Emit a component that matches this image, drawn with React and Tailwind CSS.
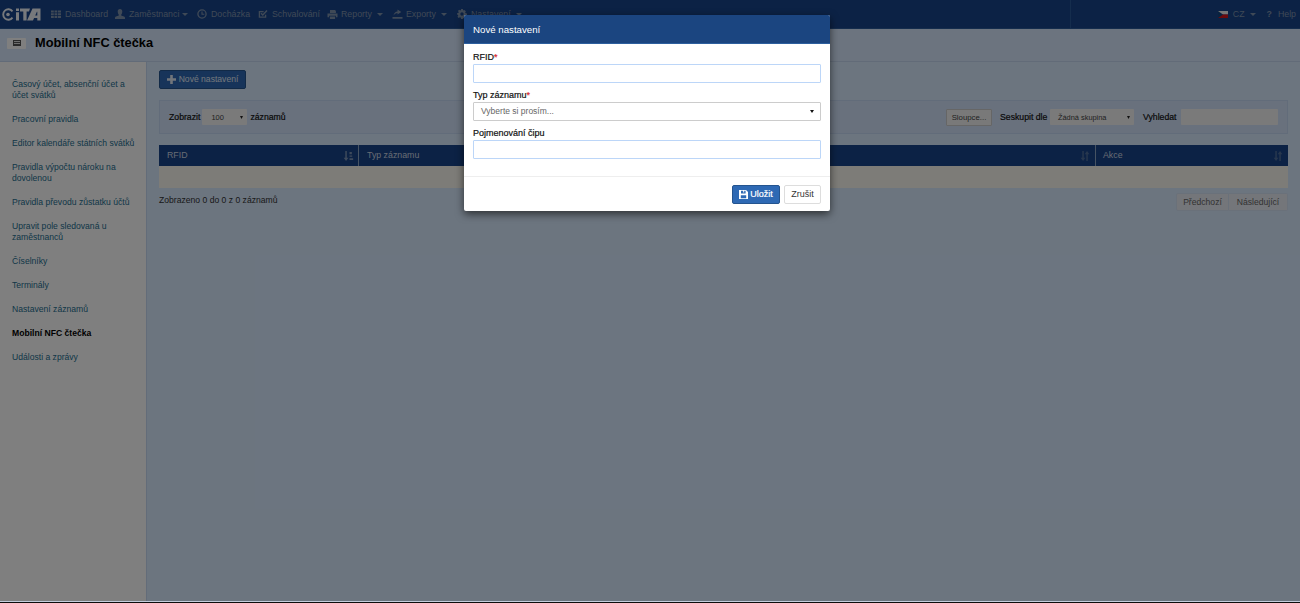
import React from "react";

const Caret = ({ w = 6, h = 3, className = "" }) => (
  <svg width={w} height={h} viewBox="0 0 6 3" preserveAspectRatio="none" fill="currentColor" className={"shrink-0 " + className}>
    <path d="M0 0h6L3 3z" />
  </svg>
);

const Ic = ({ children, w = 10, h = 10 }) => (
  <svg width={w} height={h} viewBox="0 0 10 10" fill="currentColor" className="shrink-0">{children}</svg>
);

const GridIc = () => (
  <Ic>
    <path d="M0 1.5h2.8v2H0zM3.5 1.5h2.8v2H3.5zM7 1.5h3v2H7zM0 4.2h2.8v2H0zM3.5 4.2h2.8v2H3.5zM7 4.2h3v2H7zM0 6.9h2.8v2H0zM3.5 6.9h2.8v2H3.5zM7 6.9h3v2H7z" />
  </Ic>
);
const UserIc = () => (
  <Ic>
    <path d="M5 0c1.5 0 2.3 1 2.3 2.5S6.500 5.600 6 6c.3.600 1.200.8 2.300 1.200.9.3 1.700.7 1.700 1.600V10H0V8.800c0-.9.8-1.300 1.700-1.600C2.800 6.800 3.700 6.600 4 6c-.5-.4-1.300-2-1.300-3.500S3.500 0 5 0z" />
  </Ic>
);
const ClockIc = () => (
  <Ic>
    <circle cx="5" cy="5" r="4.100" fill="none" stroke="currentColor" strokeWidth="1.300" />
    <path d="M5 2.400v2.900h2.300" fill="none" stroke="currentColor" strokeWidth="1.100" />
  </Ic>
);
const CheckIc = () => (
  <Ic>
    <path d="M7.600 5.800v2.400H1.400V2.600h4.200" fill="none" stroke="currentColor" strokeWidth="1.300" />
    <path d="M3 4.300 4.800 6 9 1.600" fill="none" stroke="currentColor" strokeWidth="1.500" />
  </Ic>
);
const PrintIc = () => (
  <Ic w={11}>
    <path d="M2.500 1h5l.9.9V4H2.500zM0 4.600h10v3.600H8.400V6.800H1.600v1.400H0zM2.400 7.600h5.200V10H2.400z" />
  </Ic>
);
const ExportIc = () => (
  <Ic w={11}>
    <path d="M0 8h10v1.800H0zM1 6.600c.4-2.600 1.900-3.900 4-4.100V.6L8.800 3 5 5.400V3.900C3.400 4 2 5 1 6.600z" />
  </Ic>
);
const GearIc = () => (
  <Ic>
    <path fillRule="evenodd" d="M4.100 0h1.800l.3 1.400 1-.4L8.900 2.200l-.8 1.100.5.900L10 4.500v1.800l-1.400.3-.5 1 .8 1.100-1.300 1.200-1.100-.8-.6.3L5.900 10H4.100l-.3-1.500-.9-.3-1.200.8L.5 7.700l.8-1.100-.4-.9L0 5.500V4.300l1.400-.3.300-.9-.8-1.100L2.200.7l1.100.7.600-.3zM5 3.300a1.700 1.700 0 1 0 0 3.400 1.700 1.700 0 0 0 0-3.400z" />
  </Ic>
);

const SortIcon = ({ active }) => (
  <svg width="11" height="10" viewBox="0 0 11 11" fill="currentColor" className={active ? "text-[#7d95b8]" : "text-[#4f6f9c]"}>
    <path d="M2 0h1.600v7.500H5.400L2.800 11 .2 7.500H2z" />
    {active ? <path d="M6.600 1h2.600v2.600H6.600zM6.600 5h3v1.400h-3zM6.600 8h4v1.800h-4z" /> : <path d="M8 11H6.400V3.500H4.600L7.200 0l2.600 3.500H8z" />}
  </svg>
);

function NavItem({ icon, label, caret, className = "" }) {
  return (
    <div className={"flex shrink-0 items-center text-[#7f93ad] " + className}>
      <span className="flex w-[14px] shrink-0 items-center">{icon}</span>
      <span>{label}</span>
      {caret}
    </div>
  );
}

const side = [
  "Časový účet, absenční účet a účet svátků",
  "Pracovní pravidla",
  "Editor kalendáře státních svátků",
  "Pravidla výpočtu nároku na dovolenou",
  "Pravidla převodu zůstatku účtů",
  "Upravit pole sledovaná u zaměstnanců",
  "Číselníky",
  "Terminály",
  "Nastavení záznamů",
  "Mobilní NFC čtečka",
  "Události a zprávy",
];

const Req = () => <span className="text-[#d9282f]">*</span>;
const strong = "[-webkit-text-stroke:0.2px_currentColor]";

export default function App() {
  return (
    <div className="relative h-[603px] w-[1300px] overflow-hidden bg-[#d8eaff] text-[8.700px] leading-[11px]" style={{ fontFamily: '"Liberation Sans", Arial, sans-serif' }}>
      <div className="flex h-[601px] flex-col">
        <header className="flex h-[29px] shrink-0 items-center border-b border-b-[#2a5a9a] bg-[#19448a] text-[8.800px]">
          <div className="flex w-[50px] shrink-0 items-center pl-[1px]">
            <svg width="40" height="13" viewBox="0 0 40 13">
              <path d="M11.500 3.300A5.200 5.200 0 1 0 11.500 9.700" fill="none" stroke="#eef2f8" strokeWidth="1.900" />
              <circle cx="7" cy="6.500" r="1.800" fill="#eef2f8" />
              <path d="M15 4.200h3v8.300h-3zM15 .5h3v2.500h-3zM19 .5h10l-1 3h-2.400v9h-3.300v-9H19z" fill="#eef2f8" />
              <path d="M26 12.500 31.500 .5H39.500v12h-3.200v-2.400h-3.200l-1.100 2.400zM34.200 7.500h2.100V3.700h-.4z" fill="#eef2f8" fillRule="evenodd" />
            </svg>
          </div>
          <nav className="ml-[1px] flex items-center">
            <NavItem className="w-[64px]" icon={<GridIc />} label="Dashboard" />
            <NavItem className="w-[82px]" icon={<UserIc />} label="Zaměstnanci" caret={<Caret className="ml-[3px]" />} />
            <NavItem className="w-[61px]" icon={<ClockIc />} label="Docházka" />
            <NavItem className="w-[69px]" icon={<CheckIc />} label="Schvalování" />
            <NavItem className="w-[65px]" icon={<PrintIc />} label="Reporty" caret={<Caret className="ml-[5px]" />} />
            <NavItem className="w-[65px]" icon={<ExportIc />} label="Exporty" caret={<Caret className="ml-[5px]" />} />
            <NavItem icon={<GearIc />} label="Nastavení" caret={<Caret className="ml-[5px]" />} />
          </nav>
          <div className="ml-auto flex h-full w-[230px] items-center justify-end gap-[11px] border-l border-l-[#2a5a9a] pr-[4px]">
            <div className="flex items-center gap-[5px] text-[#7f93ad]">
              <svg width="10" height="7" viewBox="0 0 10 7" className="shrink-0">
                <path d="M0 0h10v3.500H0z" fill="#eeeeee" />
                <path d="M0 3.500h10V7H0z" fill="#d7141a" />
                <path d="M0 0 5 3.500 0 7z" fill="#11457e" />
              </svg>
              <span>CZ</span>
              <Caret />
            </div>
            <div className="flex items-center gap-[6px] text-[#7f93ad]">
              <span className="font-bold">?</span>
              <span>Help</span>
            </div>
          </div>
        </header>

        <div className="flex h-[33px] shrink-0 items-center border-b border-b-[#c4d6f0] bg-[#d8e9ff] pb-[4px] pl-[7px]">
          <span className="flex h-[11px] w-[19px] items-center justify-center rounded-[1px] bg-white">
            <svg width="8" height="6" viewBox="0 0 8 6" fill="#222">
              <path d="M0 0h8v6H0z" fill="#555" />
              <path d="M1 1h6v1H1zM1 3h6v1H1z" fill="#ddd" />
            </svg>
          </span>
          <h1 className="ml-[9px] text-[12.800px] font-bold leading-none text-[#000]">Mobilní NFC čtečka</h1>
        </div>

        <div className="flex min-h-0 flex-1">
          <aside className="w-[147px] shrink-0 border-r border-r-[#c6d8f3] bg-[#ffffff] pl-[12px] pr-[10px] pt-[17px] text-[8.600px] leading-[11px]">
            {side.map((s, i) => (
              <div key={s} className={"mb-[13px] " + (i === 9 ? "font-bold text-[#000]" : "text-[#1d6e8f]")}>{s}</div>
            ))}
          </aside>

          <main className="min-w-0 flex-1 bg-[#d8eaff] pl-[12px] pr-[12px] pt-[8px]">
            <button className="flex h-[19px] w-[87px] items-center justify-center gap-[3px] rounded-[2px] border border-[#24548f] bg-[#2e69b4] text-[8.600px] text-[#e3ecf7]">
              <svg width="9" height="9" viewBox="0 0 9 9" fill="currentColor" className="shrink-0"><path d="M3.200 0h2.600v3.200H9v2.600H5.800V9H3.200V5.800H0V3.200h3.200z" /></svg>
              Nové nastavení
            </button>

            <div className="mt-[11px] flex h-[34px] items-center border border-[#c4d8f5] bg-[#d3e3fb] pl-[9px] pr-[9px]">
              <span className={"text-[#111] " + strong}>Zobrazit</span>
              <span className="ml-[2px] flex h-[16px] w-[45px] items-center justify-between rounded-[1px] bg-[#f5f5f5] pl-[9px] pr-[4px] text-[7.500px] text-[#444]">
                100
                <Caret w={3} h={3} className="text-[#222]" />
              </span>
              <span className={"ml-[3px] text-[#111] " + strong}>záznamů</span>
              <div className="ml-auto flex items-center">
                <span className="flex h-[17px] w-[46px] items-center justify-center rounded-[1px] border border-[#ccc] bg-[#f3f3f3] text-[7.800px] text-[#444]">Sloupce...</span>
                <span className={"ml-[8px] w-[50px] text-[#111] " + strong}>Seskupit dle</span>
                <span className="flex h-[16px] w-[84px] items-center justify-between rounded-[1px] bg-[#f5f5f5] pl-[8px] pr-[4px] text-[7.400px] text-[#444]">
                  Žádná skupina
                  <Caret w={3} h={3} className="text-[#222]" />
                </span>
                <span className={"ml-[9px] w-[38px] text-[#111] " + strong}>Vyhledat</span>
                <span className="h-[16px] w-[97px] rounded-[1px] bg-[#f5f5f5]" />
              </div>
            </div>

            <div className="mt-[11px]">
              <div className="flex h-[21px] items-center bg-[#19448a] text-[8.800px] text-[#cdd7e5]">
                <div className="flex h-full w-[200px] items-center justify-between border-r border-r-[#8da6c6] pl-[8px] pr-[4px]">RFID<SortIcon active /></div>
                <div className="flex h-full flex-1 items-center justify-between border-r border-r-[#8da6c6] pl-[8px] pr-[4px]">Typ záznamu<SortIcon /></div>
                <div className="flex h-full w-[192px] items-center justify-between pl-[7px] pr-[4px]">Akce<SortIcon /></div>
              </div>
              <div className="h-[22px] bg-[#fbf9f0]" />
            </div>

            <div className="mt-[5px] flex items-start justify-between">
              <span className="pt-[2px] text-[8.600px] text-[#333]">Zobrazeno 0 do 0 z 0 záznamů</span>
              <div className="flex h-[18px] text-[8.600px] text-[#666]">
                <span className="flex w-[53px] items-center justify-center rounded-l-[2px] border border-[#d5e2f5] bg-[#e9edf4]">Předchozí</span>
                <span className="flex w-[59px] items-center justify-center rounded-r-[2px] border border-l-0 border-[#d5e2f5] bg-[#e9edf4]">Následující</span>
              </div>
            </div>
          </main>
        </div>
      </div>

      <div className="absolute inset-0 bg-black/50" />

      <div className="absolute left-[464px] top-[15px] w-[366px] overflow-hidden rounded-[2px] bg-white shadow-[0_3px_9px_rgba(0,0,0,0.6)]">
        <div className="flex h-[29px] items-center border-b border-b-[#2d5f9e] bg-[#1b4580] pl-[9px] text-[9.700px] text-white">Nové nastavení</div>
        <div className="px-[9px] pb-[17px] pt-[8px] text-[9px] text-[#111]">
          <label className={"block h-[11px] " + strong}>RFID<Req /></label>
          <div className="mt-[1px] h-[19px] rounded-[1px] border border-[#bcd6f8] bg-white" />
          <label className={"mt-[7px] block h-[11px] " + strong}>Typ záznamu<Req /></label>
          <div className="mt-[1px] flex h-[19px] items-center justify-between rounded-[1px] border border-[#ccc] bg-white pl-[7px] pr-[6px] text-[8.500px] text-[#666]">
            Vyberte si prosím...
            <Caret w={4} h={3} className="text-[#111]" />
          </div>
          <label className={"mt-[7px] block h-[11px] " + strong}>Pojmenování čipu</label>
          <div className="mt-[1px] h-[19px] rounded-[1px] border border-[#bcd6f8] bg-white" />
        </div>
        <div className="flex h-[35px] items-center justify-end gap-[4px] border-t border-t-[#eeeeee] pr-[9px]">
          <button className={"flex h-[19px] w-[48px] items-center justify-center gap-[2px] rounded-[2px] border border-[#24548f] bg-[#2e69b4] text-[9px] text-white " + strong}>
            <svg width="9" height="9" viewBox="0 0 9 9" fill="currentColor" className="shrink-0">
              <path fillRule="evenodd" d="M0 0h7l2 2v7H0zM2 .8v2.700h4.600V.8H5.200v1.800H4.200V.8zM1.800 5.200V8.200h5.400V5.200z" />
            </svg>
            Uložit
          </button>
          <button className="h-[19px] w-[37px] rounded-[2px] border border-[#ddd] bg-white text-[9px] text-[#333]">Zrušit</button>
        </div>
      </div>

      <div className="absolute inset-x-0 bottom-0 h-[2px] border-t border-t-[#c3ccdc] bg-[#0c0c0c]" />
    </div>
  );
}
